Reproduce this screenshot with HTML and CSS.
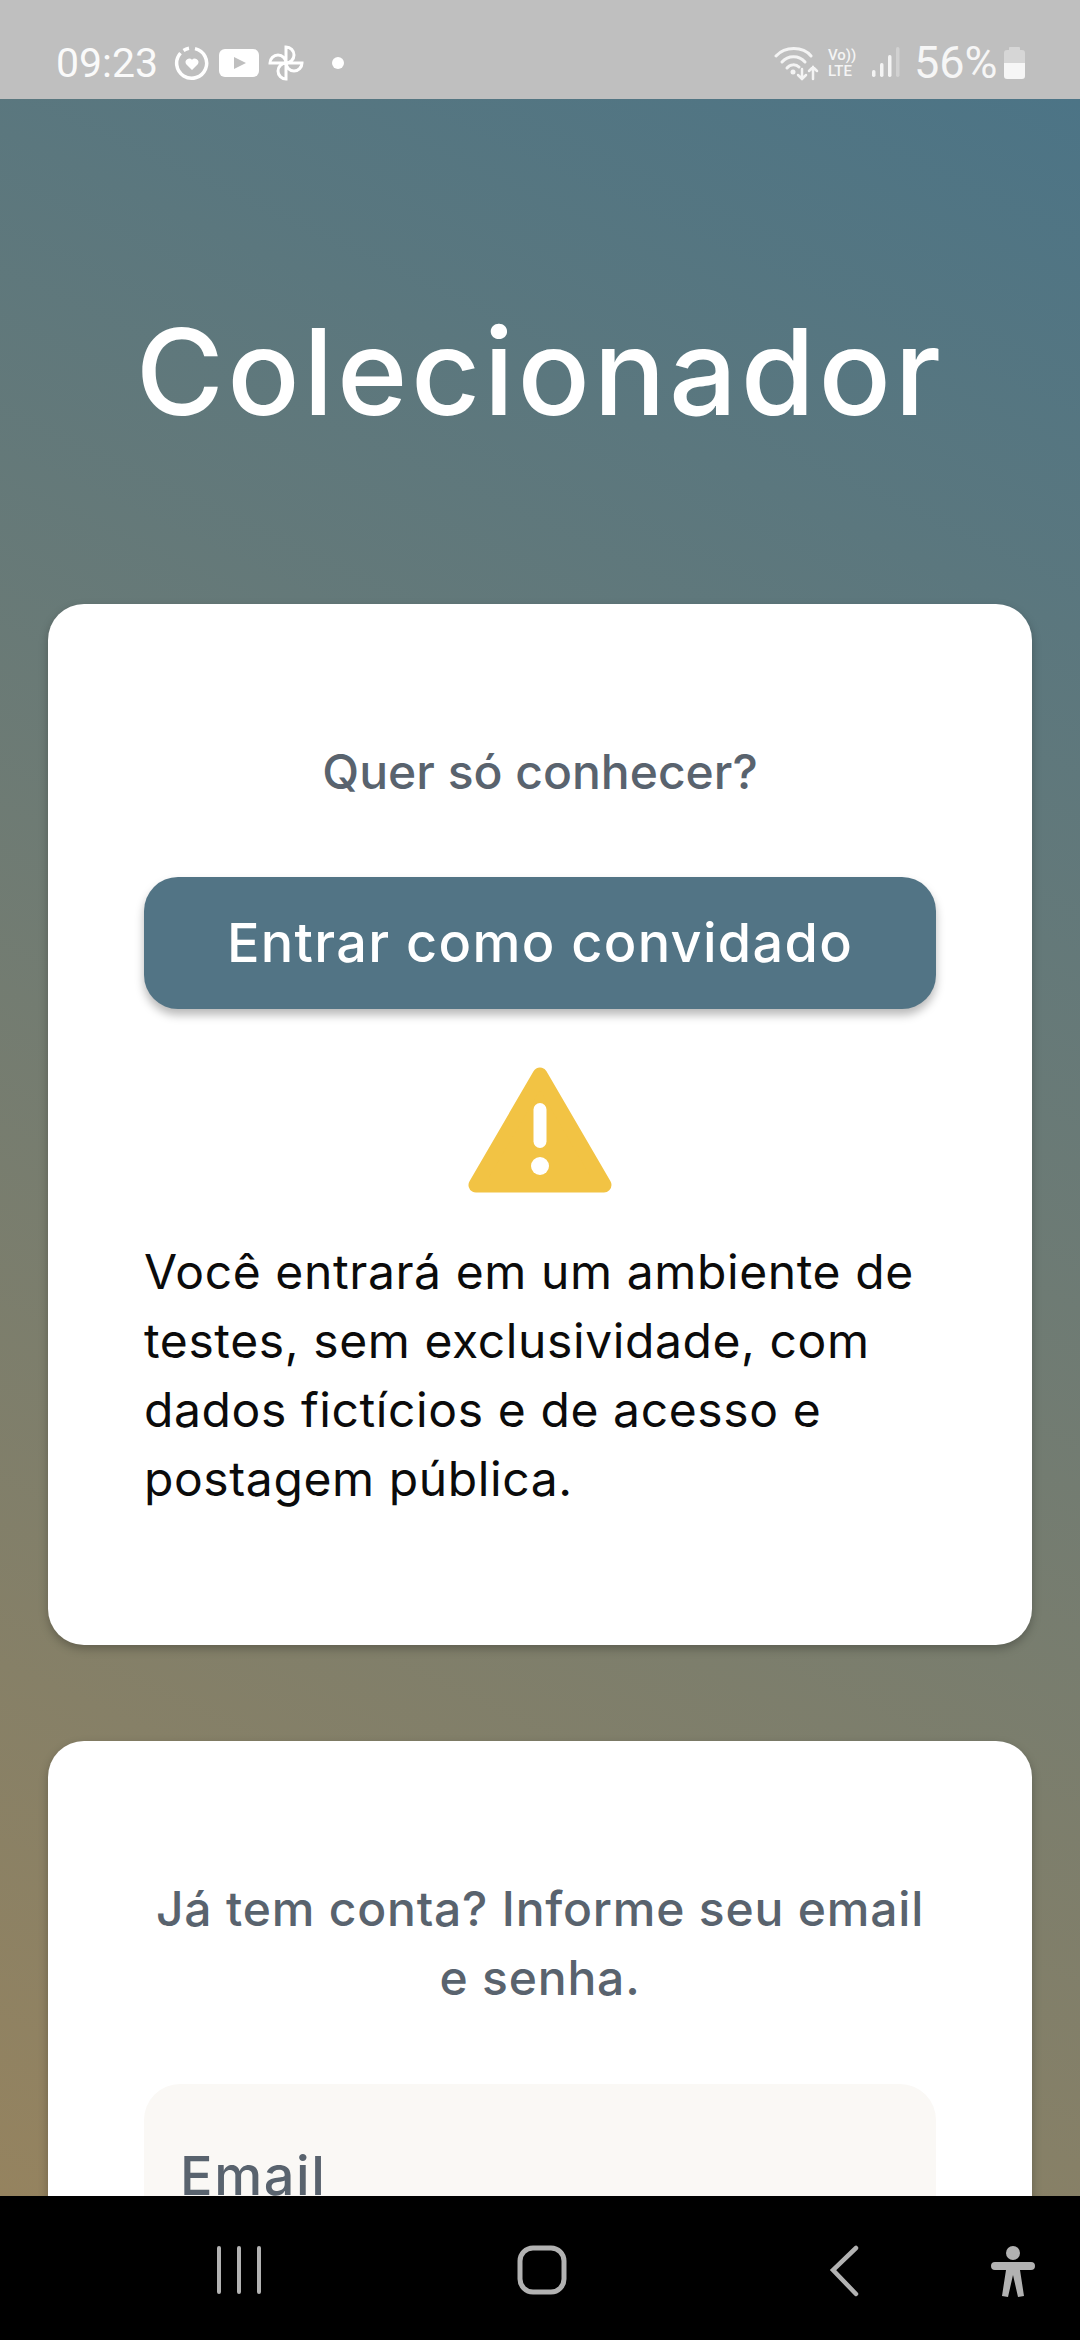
FILE: index.html
```html
<!DOCTYPE html>
<html lang="pt">
<head>
<meta charset="utf-8">
<title>Colecionador</title>
<link rel="stylesheet" href="styles.css">
</head>
<body>
<div class="screen">
  <header class="status">
    <div class="status-left">
      <span class="clock">09:23</span>
      <svg class="ic-ring" width="36" height="36" viewBox="0 0 36 36"><path d="M21 3.600A15 15 0 1 1 6.500 8.200M9.500 5.500A15 15 0 0 1 15 3.300" fill="none" stroke="#fff" stroke-width="3.500"/><path d="M18 25l-6-6a3.700 3.700 0 0 1 6-4.200a3.700 3.700 0 0 1 6 4.200z" fill="#fff"/></svg>
      <svg class="ic-yt" width="40" height="28" viewBox="0 0 40 28"><rect width="40" height="28" rx="6" fill="#fff"/><path d="M15 8l12 6-12 6z" fill="#bfbfbf"/></svg>
      <svg class="ic-wheel" width="38" height="38" viewBox="0 0 38 38"><g fill="none" stroke="#fff" stroke-width="3"><path d="M19 19V3a8 8 0 0 1 0 16z"/><path d="M19 19h16a8 8 0 0 1-16 0z"/><path d="M19 19v16a8 8 0 0 1 0-16z"/><path d="M19 19H3a8 8 0 0 1 16 0z"/></g></svg>
      <svg class="ic-dot" width="12" height="12" viewBox="0 0 12 12"><circle cx="6" cy="6" r="6" fill="#fff"/></svg>
    </div>
    <div class="status-right">
      <svg width="46" height="36" viewBox="0 0 46 36"><g fill="none" stroke="#f4f4f4" stroke-width="3" stroke-linecap="round"><path d="M2 11C11 1 29 1 37 11"/><path d="M8 17C14 10 25 10 31 17"/><path d="M13 23C16 19 22 19 25 22"/><path d="M28 24v10M24 30l4 4 4-4M39 34V22M35 26l4-4 4 4" stroke-width="2.500"/></g><circle cx="19" cy="27" r="2.500" fill="#f4f4f4"/></svg>
      <div class="volte"><span>Vo))</span><span>LTE</span></div>
      <svg class="ic-signal" width="28" height="32" viewBox="0 0 28 32"><g fill="#f4f4f4"><rect x="0" y="23" width="3.500" height="7" rx="1.700"/><rect x="8" y="16" width="3.500" height="14" rx="1.700"/><rect x="16" y="8" width="3.500" height="22" rx="1.700"/><rect x="24" y="0" width="3.500" height="30" rx="1.700" opacity=".35"/></g></svg>
      <span class="pct">56%</span>
      <svg class="ic-batt" width="21" height="32" viewBox="0 0 21 32"><path d="M6 0h9a1 1 0 0 1 1 1v2h2a3 3 0 0 1 3 3v10H0V6a3 3 0 0 1 3-3h2V1a1 1 0 0 1 1-1z" fill="#d6d6d6"/><path d="M0 16h21v13a3 3 0 0 1-3 3H3a3 3 0 0 1-3-3z" fill="#f6f6f6"/></svg>
    </div>
  </header>

  <main class="main">
    <h1 class="title">Colecionador</h1>

    <section class="card card-guest">
      <p class="lead">Quer só conhecer?</p>
      <button class="btn">Entrar como convidado</button>
      <svg class="warn" width="144" height="126" viewBox="0 0 144 126">
        <path d="M72 8L8 118h128z" fill="#f2c344" stroke="#f2c344" stroke-width="15" stroke-linejoin="round"/>
        <rect x="65.500" y="36" width="13" height="45" rx="6.500" fill="#fff"/>
        <circle cx="72" cy="99" r="9" fill="#fff"/>
      </svg>
      <p class="note">Você entrará em um ambiente de testes, sem exclusividade, com dados fictícios e de acesso e postagem pública.</p>
    </section>

    <section class="card card-login">
      <p class="lead">Já tem conta? Informe seu email<br>e senha.</p>
      <div class="field"><span class="field-label">Email</span></div>
    </section>
  </main>

  <nav class="nav">
    <svg class="nav-svg" width="1080" height="144" viewBox="0 0 1080 144">
      <g fill="none" stroke="#b2b2b2" stroke-linecap="round">
        <path d="M219 52v44M239 52v44M259 52v44" stroke-width="4"/>
        <rect x="520" y="52" width="44" height="44" rx="13" stroke-width="5"/>
        <path d="M856 52L833 74L856 98" stroke-width="4.500"/>
      </g>
      <g fill="#b2b2b2">
        <circle cx="1013" cy="57" r="7"/>
        <path d="M995 66h36a3.500 3.500 0 0 1 0 8h-11l4 26-6 1-5-22-5 22-6-1 4-26h-11a3.500 3.500 0 0 1 0-8z"/>
      </g>
    </svg>
  </nav>
</div>
</body>
</html>
```

FILE: styles.css
```css
* { box-sizing: border-box; }
html, body { margin: 0; padding: 0; }
body { width: 1080px; height: 2340px; overflow: hidden; font-family: Inter, "Noto Sans", sans-serif; }
.screen { width: 1080px; height: 2340px; display: flex; flex-direction: column; overflow: hidden; }

.status { flex: 0 0 99px; height: 99px; background: #bfbfbf; display: flex; justify-content: space-between; align-items: flex-start; padding: 45px 55px 0 56px; color: #fafafa; font-family: Roboto, Inter, sans-serif; }
.status-left, .status-right { display: flex; align-items: center; height: 36px; }
.clock { font-size: 41px; line-height: 36px; width: 118px; }
.ic-ring { margin-right: 9px; }
.ic-yt { margin-right: 8px; }
.ic-wheel { margin-right: 27px; }
.volte { display: flex; flex-direction: column; margin-left: 8px; font-size: 15px; line-height: 16px; font-weight: 500; color: #f4f4f4; width: 36px; }
.ic-signal { margin-left: 8px; }
.pct { font-size: 45px; line-height: 36px; margin-left: 14px; width: 90px; color: #f6f6f6; }

.main { flex: 1 1 auto; min-height: 0; overflow: hidden; padding: 0 48px; background: linear-gradient(205deg, #4c7486 0%, #95835f 100%); }
.title { margin: 0; padding-top: 203px; height: 505px; text-align: center; color: #fff; font-size: 120px; line-height: 140px; font-weight: 500; letter-spacing: 3.500px; }
.card { background: #fff; border-radius: 36px; padding: 64px 96px; box-shadow: 0 4px 10px rgba(0,0,0,.25); }
.card-guest { height: 1041px; margin-bottom: 96px; display: flex; flex-direction: column; align-items: center; }
.card-login { display: flex; flex-direction: column; align-items: center; }
.lead { margin: 0; text-align: center; color: #59636e; font-size: 48px; line-height: 69px; font-weight: 500; }
.card-guest .lead { height: 69px; margin-top: 69px; }
.card-login .lead { margin-top: 69px; width: 820px; flex: none; letter-spacing: .8px; }
.btn { margin-top: 71px; width: 792px; height: 132px; flex: none; background: #527485; border: 0; border-radius: 34px; color: #fff; font: 500 54px/1 Inter, sans-serif; letter-spacing: 1.300px; box-shadow: 0 6px 10px rgba(0,0,0,.28); }
.warn { margin-top: 58px; flex: none; }
.note { margin: 44px 0 0; width: 792px; color: #0b0b0b; font-size: 48px; line-height: 69px; letter-spacing: .6px; }
.field { margin-top: 72px; width: 792px; height: 300px; background: #faf8f5; border-radius: 36px; padding: 57px 36px; flex: none; }
.field-label { display: block; color: #59636e; font-size: 54px; line-height: 70px; font-weight: 500; letter-spacing: 1.600px; }

.nav { flex: 0 0 144px; height: 144px; background: #000; }
.nav-svg { display: block; }
```
